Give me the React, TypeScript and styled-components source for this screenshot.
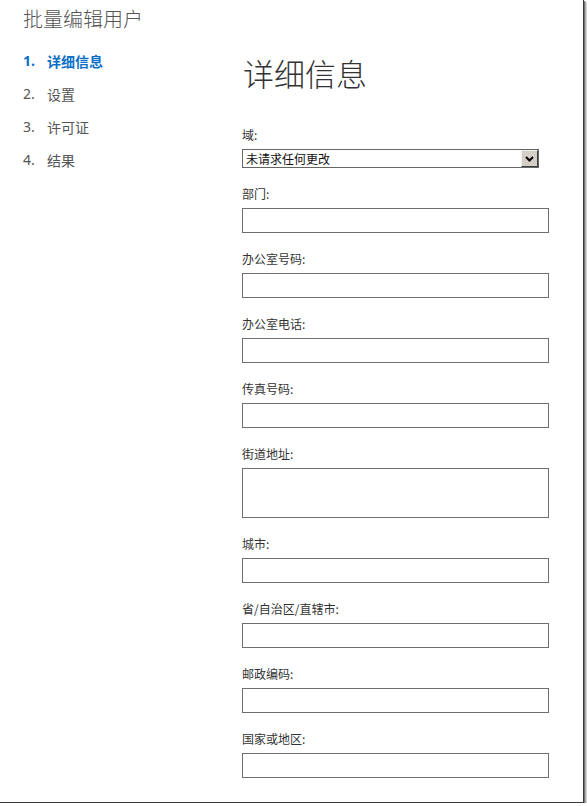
import React from "react";
import styled, { createGlobalStyle } from "styled-components";

const GlobalStyle = createGlobalStyle`
  html, body { margin: 0; padding: 0; background: #ffffff; }
  body { font-family: "Noto Sans", "Noto Sans CJK SC", sans-serif; }
  * { box-sizing: border-box; }
`;

const Page = styled.div`
  width: 584px;
  height: 803px;
  background: #ffffff;
  border-right: 1px solid #3a3a3a;
  border-bottom: 1px solid #3a3a3a;
  box-shadow: 1px 1px 0 #777, 2px 2px 1px #aaa, 3px 3px 2px #d5d5d5;
  display: flex;
  flex-direction: column;
  overflow: hidden;
`;

const Header = styled.h1`
  margin: 0;
  padding: 6px 0 0 23px;
  font-size: 20px;
  line-height: 25px;
  font-weight: 300;
  color: #555555;
  font-family: "Noto Sans CJK SC", sans-serif;
`;

const Body = styled.div`
  display: flex;
  flex: 1;
`;

const Sidebar = styled.nav`
  width: 242px;
  padding: 13px 0 0 23px;
  display: flex;
  flex-direction: column;
`;

const NavItem = styled.div<{ $active?: boolean }>`
  display: flex;
  align-items: center;
  height: 33px;
  font-size: 14px;
  color: ${(p) => (p.$active ? "#0b6fc6" : "#555555")};
  font-weight: ${(p) => (p.$active ? 700 : 400)};
  font-family: "Noto Sans", "Noto Sans CJK SC", sans-serif;
`;

const NavNum = styled.span`
  width: 24px;
`;

const Main = styled.main`
  flex: 1;
  padding-top: 22px;
  display: flex;
  flex-direction: column;
`;

const Title = styled.h2`
  margin: 0 0 16px 1px;
  font-size: 31px;
  line-height: 40px;
  font-weight: 300;
  color: #333333;
  font-family: "Noto Sans CJK SC", sans-serif;
`;

const Field = styled.div`
  display: flex;
  flex-direction: column;
  margin-top: 18px;
`;

const Label = styled.label`
  font-size: 12px;
  line-height: 15px;
  height: 15px;
  margin-bottom: 7px;
  color: #333333;
  font-family: "Noto Sans CJK SC", sans-serif;
`;

const TextInput = styled.input`
  width: 307px;
  height: 25px;
  border: 1px solid #6e6e6e;
  background: #ffffff;
  padding: 2px 4px;
  margin: 0;
  font-size: 12px;
`;

const TextArea = styled.textarea`
  width: 307px;
  height: 50px;
  border: 1px solid #6e6e6e;
  background: #ffffff;
  padding: 2px 4px;
  margin: 0;
  resize: none;
  font-size: 12px;
`;

const SelectBox = styled.div`
  display: flex;
  width: 297px;
  height: 19px;
  border: 1px solid #666666;
  background: #ffffff;
`;

const NativeSelect = styled.select`
  flex: 1;
  appearance: none;
  -webkit-appearance: none;
  border: none;
  outline: none;
  background: transparent;
  margin: 0;
  padding: 0 0 0 3px;
  height: 17px;
  font-size: 12px;
  line-height: 17px;
  color: #111111;
  font-family: "Noto Sans CJK SC", sans-serif;
`;

const ArrowButton = styled.span`
  width: 17px;
  height: 17px;
  background: #d4d0c8;
  border-left: 1px solid #f0f0f0;
  border-top: 1px solid #f0f0f0;
  border-right: 1px solid #404040;
  border-bottom: 1px solid #404040;
  display: flex;
  align-items: center;
  justify-content: center;
`;

const fields: { label: string; multi?: boolean }[] = [
  { label: "部门:" },
  { label: "办公室号码:" },
  { label: "办公室电话:" },
  { label: "传真号码:" },
  { label: "街道地址:", multi: true },
  { label: "城市:" },
  { label: "省/自治区/直辖市:" },
  { label: "邮政编码:" },
  { label: "国家或地区:" },
];

const nav = ["详细信息", "设置", "许可证", "结果"];

export default function App() {
  return (
    <>
      <GlobalStyle />
      <Page>
        <Header>批量编辑用户</Header>
        <Body>
          <Sidebar>
            {nav.map((n, i) => (
              <NavItem key={n} $active={i === 0}>
                <NavNum>{i + 1}.</NavNum>
                {n}
              </NavItem>
            ))}
          </Sidebar>
          <Main>
            <Title>详细信息</Title>
            <Field>
              <Label>域:</Label>
              <SelectBox>
                <NativeSelect defaultValue="none">
                  <option value="none">未请求任何更改</option>
                </NativeSelect>
                <ArrowButton>
                  <svg width="9" height="6" viewBox="0 0 9 6">
                    <path d="M1 1 L4.5 4.5 L8 1" fill="none" stroke="#000" strokeWidth="2" />
                  </svg>
                </ArrowButton>
              </SelectBox>
            </Field>
            {fields.map((f) => (
              <Field key={f.label}>
                <Label>{f.label}</Label>
                {f.multi ? <TextArea /> : <TextInput />}
              </Field>
            ))}
          </Main>
        </Body>
      </Page>
    </>
  );
}
